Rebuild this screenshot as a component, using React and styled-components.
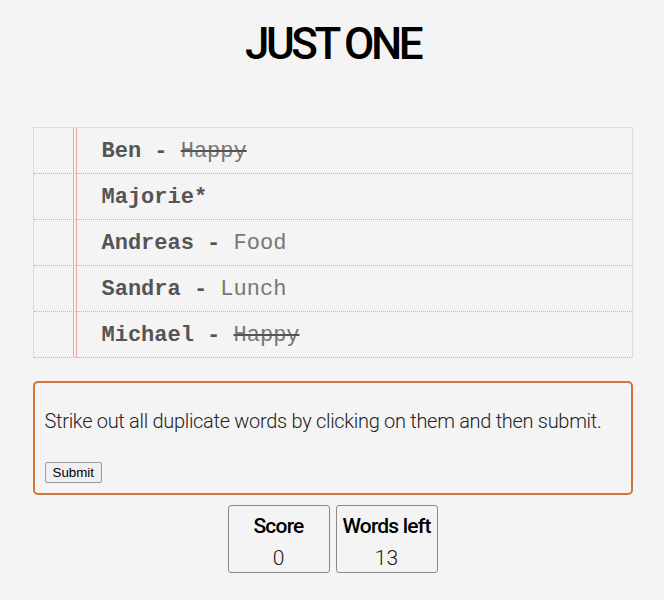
import React from "react";
import styled, { createGlobalStyle } from "styled-components";

const Global = createGlobalStyle`
  html, body { margin: 0; padding: 0; background: #f4f4f4; }
  body { font-family: "Roboto", "Liberation Sans", sans-serif; color: #111; }
`;

const Page = styled.div`
  width: 600px;
  margin: 0 auto;
  padding: 20px 0 0 1px;
`;

const Title = styled.h1`
  margin: 0 0 59px;
  text-align: center;
  font-size: 44px;
  line-height: 48px;
  font-weight: 500;
  color: #000;
  letter-spacing: -3.5px;
`;

const List = styled.ul`
  position: relative;
  list-style: none;
  margin: 0;
  padding: 0;
  border: 1px solid #dcdcdc;
  border-bottom: none;
`;

const Margin = styled.div`
  position: absolute;
  top: 0;
  bottom: 0;
  left: 39px;
  width: 2px;
  border-left: 1px solid #f2a69c;
  border-right: 1px solid #f2a69c;
`;

const Row = styled.li`
  display: flex;
  align-items: center;
  padding: 1px 0 0 68px;
  box-sizing: border-box;
  height: 46px;
  border-bottom: 1px dotted #b8b8b8;
  font-family: "Liberation Mono", "Courier New", monospace;
  font-size: 22px;
`;

const Name = styled.span`
  font-weight: 700;
  color: #555;
  white-space: pre;
`;

const Word = styled.span`
  color: #777;
  text-decoration: ${(p) => (p.$struck ? "line-through" : "none")};
  text-decoration-color: #555;
`;

const Panel = styled.div`
  margin-top: 23px;
  border: 2px solid #d4733a;
  border-radius: 5px;
  padding: 26px 10px 10px;
`;

const Instruction = styled.p`
  margin: 0 0 29px;
  font-size: 20px;
  line-height: 24px;
  font-weight: 300;
  letter-spacing: -0.3px;
  color: #222;
  white-space: nowrap;
`;

const Button = styled.button`
  font-family: "Liberation Sans", Arial, sans-serif;
  font-size: 13.33px;
  padding: 2px 7px;
  background: #efefef;
  border: 1px solid #999;
  border-radius: 2px;
  color: #000;
`;

const Stats = styled.div`
  display: flex;
  justify-content: center;
  gap: 6px;
  margin-top: 10px;
`;

const Stat = styled.div`
  width: 102px;
  height: 68px;
  border: 1px solid #8a8a8a;
  border-radius: 3px;
  display: flex;
  flex-direction: column;
  align-items: center;
  padding-top: 7px;
  box-sizing: border-box;
`;

const StatLabel = styled.div`
  font-size: 21px;
  line-height: 26px;
  font-weight: 500;
  letter-spacing: -0.8px;
  color: #000;
  white-space: nowrap;
`;

const StatValue = styled.div`
  margin-top: 6px;
  font-size: 21px;
  line-height: 26px;
  font-weight: 300;
  color: #222;
`;

const rows = [
  { name: "Ben", word: "Happy", struck: true },
  { name: "Majorie*" },
  { name: "Andreas", word: "Food" },
  { name: "Sandra", word: "Lunch" },
  { name: "Michael", word: "Happy", struck: true },
];

export default function App() {
  return (
    <>
      <Global />
      <Page>
        <Title>JUST ONE</Title>
        <List>
          <Margin />
          {rows.map((r) => (
            <Row key={r.name}>
              <Name>{r.word ? `${r.name} - ` : r.name}</Name>
              {r.word && <Word $struck={r.struck}>{r.word}</Word>}
            </Row>
          ))}
        </List>
        <Panel>
          <Instruction>
            Strike out all duplicate words by clicking on them and then submit.
          </Instruction>
          <Button>Submit</Button>
        </Panel>
        <Stats>
          <Stat>
            <StatLabel>Score</StatLabel>
            <StatValue>0</StatValue>
          </Stat>
          <Stat>
            <StatLabel>Words left</StatLabel>
            <StatValue>13</StatValue>
          </Stat>
        </Stats>
      </Page>
    </>
  );
}
